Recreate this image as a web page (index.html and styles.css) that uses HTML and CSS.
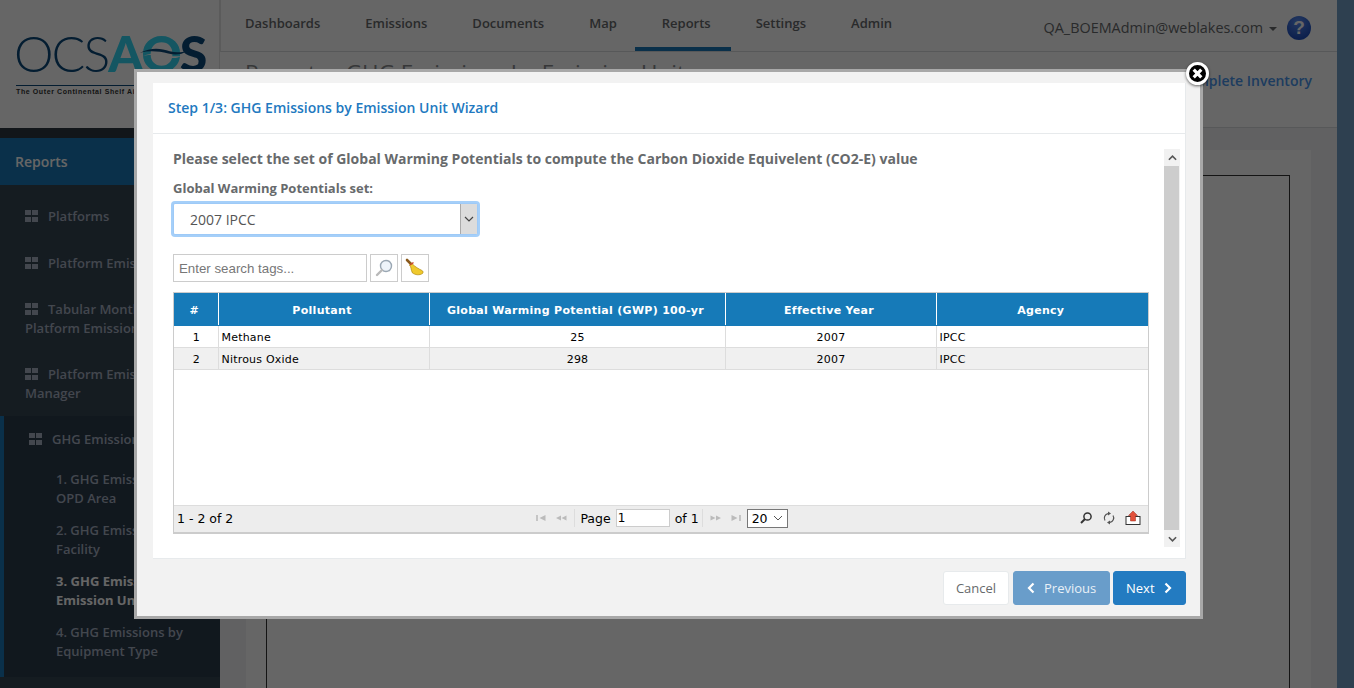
FILE: index.html
```html
<!DOCTYPE html>
<html lang="en">
<head>
    <meta charset="UTF-8">
    <title>Reports - GHG Emissions by Emission Unit</title>
    <link rel="stylesheet" href="styles.css">
</head>
<body>
    <div class="app">
        <!-- Sidebar -->
        <aside class="sidebar">
            <div class="logo">
                <div class="logo-mark">
                    <span class="logo-ocs">OCS</span><span class="logo-a">A</span><span class="logo-q">Q</span><span class="logo-s">S</span>
                    <svg class="logo-wave" viewBox="0 0 60 16"><path d="M4 13c12-5 22-4 32-1 7 2 12 2 18 0-7 5-14 4-22 2-10-3-18-3-28-1z" fill="#fff"/><path d="M0 9C14 2 26 3 38 7c8 2 15 2 22-1-7 6-15 6-24 4C24 7 12 6 0 9z" fill="#0c4a7c"/></svg>
                </div>
                <div class="logo-tag">The Outer Continental Shelf Air Quality System</div>
            </div>
            <div class="side-title">Reports</div>
            <ul class="side-menu">
                <li class="side-item"><span class="grid-icon"></span>Platforms</li>
                <li class="side-item"><span class="grid-icon"></span>Platform Emissions</li>
                <li class="side-item"><span class="grid-icon"></span>Tabular Monthly Platform Emissions</li>
                <li class="side-item"><span class="grid-icon"></span>Platform Emissions Manager</li>
                <li class="side-group">
                    <div class="side-group-title"><span class="grid-icon"></span>GHG Emissions Reports</div>
                    <a class="side-sub">1. GHG Emissions by OPD Area</a>
                    <a class="side-sub">2. GHG Emissions by Facility</a>
                    <a class="side-sub current">3. GHG Emissions by Emission Unit</a>
                    <a class="side-sub">4. GHG Emissions by Equipment Type</a>
                </li>
            </ul>
        </aside>

        <!-- Main -->
        <div class="main">
            <header class="topbar">
                <nav class="tabs">
                    <a class="tab">Dashboards</a>
                    <a class="tab">Emissions</a>
                    <a class="tab">Documents</a>
                    <a class="tab">Map</a>
                    <a class="tab active">Reports</a>
                    <a class="tab">Settings</a>
                    <a class="tab">Admin</a>
                </nav>
                <div class="user">
                    <span>QA_BOEMAdmin@weblakes.com</span>
                    <span class="caret"></span>
                    <span class="help">?</span>
                </div>
            </header>
            <div class="title-row">
                <h2 class="page-title">Reports - GHG Emissions by Emission Unit</h2>
                <a class="inventory">Complete Inventory</a>
            </div>
            <div class="content">
                <div class="panel">
                    <div class="report-frame"></div>
                </div>
            </div>
        </div>
        <div class="edge"></div>
    </div>

    <div class="overlay"></div>

    <!-- Wizard -->
    <div class="modal">
        <div class="close">
            <svg viewBox="0 0 12 12" width="13" height="13"><path d="M2.500 2.500l7 7M9.500 2.500l-7 7" stroke="#fff" stroke-width="3"/></svg>
        </div>
        <div class="wizard">
            <div class="wizard-head">Step 1/3: GHG Emissions by Emission Unit Wizard</div>
            <div class="wizard-body">
                <div class="wizard-main">
                    <h4 class="prompt">Please select the set of Global Warming Potentials to compute the Carbon Dioxide Equivelent (CO2-E) value</h4>
                    <label class="field-label">Global Warming Potentials set:</label>
                    <div class="select-box">
                        <span class="select-value">2007 IPCC</span>
                        <span class="select-btn">
                            <svg viewBox="0 0 10 6" width="10" height="6"><path d="M1 1l4 4 4-4" fill="none" stroke="#444" stroke-width="1.2"/></svg>
                        </span>
                    </div>
                    <div class="search-row">
                        <input class="search-input" type="text" placeholder="Enter search tags...">
                        <span class="icon-btn">
                            <svg viewBox="0 0 20 20" width="20" height="20"><circle cx="12" cy="8" r="5.500" fill="#eef4fa" stroke="#9aa7b3" stroke-width="1.400"/><path d="M8 12l-5 5" stroke="#b9b9b9" stroke-width="2.400" stroke-linecap="round"/></svg>
                        </span>
                        <span class="icon-btn">
                            <svg viewBox="0 0 20 20" width="20" height="20"><path d="M2 2l4 4" stroke="#8a5a1c" stroke-width="2.600" stroke-linecap="round"/><path d="M6.500 5l-2 2.500c2 1 1 4 3 7.500 3 2 7 2.500 10 .5 1-1 .5-2.500-.5-3-3-1.500-7-3.500-10.500-7.500z" fill="#efc92c" stroke="#b08a10" stroke-width=".7"/><path d="M5 7l3.500-2.500" stroke="#c8402a" stroke-width="1.400"/></svg>
                        </span>
                    </div>
                    <div class="grid">
                        <table class="grid-table">
                            <colgroup>
                                <col class="col-num"><col class="col-pollutant"><col class="col-gwp"><col class="col-year"><col class="col-agency">
                            </colgroup>
                            <thead>
                                <tr>
                                    <th>#</th>
                                    <th>Pollutant</th>
                                    <th>Global Warming Potential (GWP) 100-yr</th>
                                    <th>Effective Year</th>
                                    <th>Agency</th>
                                </tr>
                            </thead>
                            <tbody>
                                <tr>
                                    <td class="center">1</td>
                                    <td>Methane</td>
                                    <td class="center">25</td>
                                    <td class="center">2007</td>
                                    <td>IPCC</td>
                                </tr>
                                <tr class="alt">
                                    <td class="center">2</td>
                                    <td>Nitrous Oxide</td>
                                    <td class="center">298</td>
                                    <td class="center">2007</td>
                                    <td>IPCC</td>
                                </tr>
                            </tbody>
                        </table>
                        <div class="pager">
                            <div class="pager-count">1 - 2 of 2</div>
                            <div class="pager-center">
                                <svg class="pg-icon tight" viewBox="0 0 11 8" width="11" height="8"><path d="M1 1v6" stroke="#aaa" stroke-width="1.200"/><path d="M9.500 1v6L3.500 4z" fill="#bbb"/></svg>
                                <svg class="pg-icon" viewBox="0 0 12 8" width="12" height="8"><path d="M6 1.500v5L1 4zM11.500 1.500v5L6.500 4z" fill="#bbb"/></svg>
                                <span class="pg-sep"></span>
                                <span>Page</span>
                                <input class="pg-input" type="text" value="1">
                                <span>of 1</span>
                                <span class="pg-sep pg-sep-right"></span>
                                <svg class="pg-icon tight" viewBox="0 0 12 8" width="12" height="8"><path d="M.5 1.500v5L5.500 4zM6 1.500v5L11 4z" fill="#bbb"/></svg>
                                <svg class="pg-icon tight" viewBox="0 0 11 8" width="11" height="8"><path d="M1.500 1v6l6-3z" fill="#bbb"/><path d="M10 1v6" stroke="#aaa" stroke-width="1.200"/></svg>
                                <span class="pg-size">20
                                    <svg viewBox="0 0 10 6" width="10" height="6"><path d="M1 1l4 4 4-4" fill="none" stroke="#555" stroke-width="1"/></svg>
                                </span>
                            </div>
                            <div class="pager-tools">
                                <svg viewBox="0 0 14 14" width="14" height="14"><circle cx="8.500" cy="5.500" r="3.600" fill="none" stroke="#333" stroke-width="1.500"/><path d="M6 8l-4 4" stroke="#333" stroke-width="2"/></svg>
                                <svg viewBox="0 0 14 14" width="14" height="14"><path d="M3 9.500A4.500 4.500 0 0 1 6 2.700M11 4.500A4.500 4.500 0 0 1 8 11.300" fill="none" stroke="#555" stroke-width="1.200"/><path d="M6 .5l3 2-3 2zM8 9.500l-3 2 3 2z" fill="#555"/></svg>
                                <svg viewBox="0 0 16 14" width="16" height="14"><rect x="1" y="5.500" width="14" height="8" fill="#fff" stroke="#333"/><path d="M8 0l4.500 4.500H10.500V10h-5V4.500H3.500z" fill="#e2503a" stroke="#9c2a1a" stroke-width=".5"/></svg>
                            </div>
                        </div>
                    </div>
                </div>
                <div class="scrollbar">
                    <span class="scroll-btn"><svg viewBox="0 0 10 6" width="9" height="6"><path d="M1 5l4-4 4 4" fill="none" stroke="#555" stroke-width="1.800"/></svg></span>
                    <span class="scroll-thumb"></span>
                    <span class="scroll-btn"><svg viewBox="0 0 10 6" width="9" height="6"><path d="M1 1l4 4 4-4" fill="none" stroke="#555" stroke-width="1.800"/></svg></span>
                </div>
            </div>
        </div>
        <div class="wizard-foot">
            <button class="btn btn-cancel">Cancel</button>
            <button class="btn btn-prev">
                <svg viewBox="0 0 8 12" width="8" height="12"><path d="M6.500 1.500L2 6l4.500 4.500" fill="none" stroke="#fff" stroke-width="2.200"/></svg>
                Previous
            </button>
            <button class="btn btn-next">
                Next
                <svg viewBox="0 0 8 12" width="8" height="12"><path d="M1.500 1.500L6 6l-4.500 4.500" fill="none" stroke="#fff" stroke-width="2.200"/></svg>
            </button>
        </div>
    </div>
</body>
</html>
```

FILE: styles.css
```css
* {
    box-sizing: border-box;
}

html, body {
    margin: 0;
    height: 100%;
    overflow: hidden;
}

body {
    font-family: "Open Sans", Arial, sans-serif;
    font-size: 13px;
    color: #676a6c;
    background: #fff;
}

.app {
    display: flex;
    height: 688px;
    overflow: hidden;
}

/* Sidebar */
.sidebar {
    width: 220px;
    flex-shrink: 0;
    background: #364654;
    color: #a7b1c2;
    font-weight: 600;
    display: flex;
    flex-direction: column;
}

.logo {
    height: 128px;
    margin-bottom: 10px;
    padding: 28px 0 0 14px;
    background: #fff;
    box-shadow: 0 10px 0 #2d3842;
    border-right: 1px solid #e4e4e4;
}

.logo-mark {
    position: relative;
    display: flex;
    height: 50px;
    line-height: 50px;
    font-family: Lato, sans-serif;
    font-size: 50px;
    letter-spacing: -2px;
}

.logo-ocs {
    font-weight: 300;
    color: #0c4a7c;
}

.logo-a, .logo-q, .logo-s {
    font-weight: 900;
    color: #32d8f5;
}

.logo-s {
    color: #0c4a7c;
}

.logo-wave {
    position: absolute;
    left: 126px;
    top: 17px;
    width: 47px;
    height: 14px;
}

.logo-tag {
    margin: 7px 0 0 2px;
    padding-top: 2px;
    width: 190px;
    border-top: 1px solid #0c4a7c;
    font-family: "Liberation Sans", sans-serif;
    font-size: 7px;
    font-weight: 700;
    letter-spacing: .6px;
    white-space: nowrap;
    color: #333;
}

.side-title {
    height: 47px;
    line-height: 47px;
    padding-left: 15px;
    font-size: 14px;
    color: #fff;
    background: #1a79b8;
}

.side-menu {
    list-style: none;
    margin: 0;
    padding: 0;
    flex: 1;
}

.side-item {
    padding: 22px 25px 13px;
    line-height: 19px;
}

.side-item:nth-child(1) { height: 47px; padding-top: 22px; }
.side-item:nth-child(2) { height: 47px; }
.side-item:nth-child(3) { height: 64px; padding-top: 21px; }
.side-item:nth-child(4) { height: 73px; padding-top: 22px; }

.grid-icon {
    display: inline-block;
    width: 13px;
    height: 12px;
    margin-right: 10px;
    vertical-align: -1px;
    background:
        linear-gradient(#a7b1c2, #a7b1c2) 0 0 / 6px 5px no-repeat,
        linear-gradient(#a7b1c2, #a7b1c2) 100% 0 / 6px 5px no-repeat,
        linear-gradient(#a7b1c2, #a7b1c2) 0 100% / 6px 5px no-repeat,
        linear-gradient(#a7b1c2, #a7b1c2) 100% 100% / 6px 5px no-repeat;
}

.side-group {
    height: 261px;
    padding-top: 14px;
    border-left: 4px solid #1a79b8;
    background: #2b3c4d;
}

.side-group-title {
    padding-left: 25px;
    line-height: 18px;
    margin-bottom: 16px;
    white-space: nowrap;
}

.side-sub {
    display: block;
    padding: 6px 25px 7px 52px;
    line-height: 19px;
    color: #a7b1c2;
}

.side-sub.current {
    color: #fff;
    font-weight: 700;
}

/* Top */
.main {
    flex: 1;
    min-width: 0;
    display: flex;
    flex-direction: column;
}

.topbar {
    height: 52px;
    flex-shrink: 0;
    display: flex;
    justify-content: space-between;
    border-bottom: 1px solid #d9dcdf;
    border-left: 1px solid #e4e4e4;
    background: #fff;
}

.tabs {
    display: flex;
    padding-left: 1.5px;
}

.tab {
    position: relative;
    padding: 14px 22.5px 0;
    height: 51px;
    font-weight: 600;
    font-size: 13px;
    color: #676a6c;
}

.tab.active::after {
    content: "";
    position: absolute;
    left: -4px;
    right: 2px;
    bottom: 0;
    height: 4px;
    background: #1a79b8;
}

.user {
    display: flex;
    align-items: center;
    padding: 4px 26px 0 0;
    font-size: 14.4px;
    color: #676a6c;
}

.caret {
    width: 0;
    height: 0;
    margin: 2px 10px 0 6px;
    border: 4px solid transparent;
    border-top-color: #676a6c;
    border-bottom: 0;
}

.help {
    width: 24px;
    height: 24px;
    border-radius: 50%;
    text-align: center;
    line-height: 24px;
    font-family: "Liberation Sans", sans-serif;
    font-size: 19px;
    font-weight: 700;
    color: #fff;
    background: radial-gradient(circle at 45% 25%, #5a8cf0, #1f50c0 75%);
}

.title-row {
    height: 76px;
    flex-shrink: 0;
    display: flex;
    justify-content: space-between;
    padding: 8px 25px 0 25px;
    border-bottom: 1px solid #d9dcdf;
    background: #fff;
}

.page-title {
    margin: 0;
    font-size: 22.5px;
    font-weight: 400;
    line-height: 26px;
    color: #8a8d90;
}

.inventory {
    margin-top: 11px;
    font-size: 14px;
    font-weight: 600;
    color: #4a96ee;
}

.content {
    flex: 1;
    padding: 22px 26px 0;
    background: #f3f3f4;
}

.panel {
    height: 100%;
    padding: 25px 21px 0 20px;
    background: #fff;
}

.report-frame {
    height: 100%;
    border: 1px solid #333;
    border-bottom: 0;
}

.edge {
    width: 17px;
    flex-shrink: 0;
    background: #74a0c8;
}

.overlay {
    position: fixed;
    inset: 0;
    background: rgba(0, 0, 0, .6);
}

/* Wizard */
.modal {
    position: absolute;
    left: 134px;
    top: 69px;
    width: 1069px;
    height: 550px;
    padding: 11px 14px 0 16px;
    border: 3px solid #a8a8a8;
    background: #f2f2f2;
}

.close {
    position: absolute;
    right: -9px;
    top: -10px;
    width: 23px;
    height: 23px;
    display: flex;
    align-items: center;
    justify-content: center;
    border: 3px solid #fff;
    border-radius: 50%;
    background: #000;
    box-shadow: 0 1px 3px rgba(0, 0, 0, .6);
}

.wizard {
    height: 476px;
    display: flex;
    flex-direction: column;
    background: #fff;
    border: 1px solid #e7eaec;
    border-left: 0;
    border-top: 0;
}

.wizard-head {
    height: 51px;
    flex-shrink: 0;
    padding: 0 0 0 15px;
    line-height: 50px;
    font-size: 14px;
    font-weight: 600;
    color: #2279c0;
    border-bottom: 1px solid #e7eaec;
}

.wizard-body {
    flex: 1;
    display: flex;
    padding: 15px 5px 0 20px;
}

.wizard-main {
    flex: 1;
    min-width: 0;
}

.prompt {
    margin: 0 0 10px;
    font-size: 14px;
    font-weight: 700;
    line-height: 20px;
    color: #676a6c;
}

.field-label {
    display: block;
    margin-bottom: 6px;
    font-size: 13px;
    font-weight: 700;
    line-height: 18px;
    color: #676a6c;
}

.select-box {
    display: flex;
    justify-content: space-between;
    width: 305px;
    height: 32px;
    border: 1px solid #9ecaf7;
    border-radius: 2px;
    box-shadow: 0 0 0 2px #a5cff9;
    background: #fff;
}

.select-value {
    padding-left: 16px;
    line-height: 32px;
    font-size: 14px;
    color: #555;
}

.select-btn {
    width: 17px;
    display: flex;
    align-items: center;
    justify-content: center;
    border-left: 1px solid #aaa;
    background: #dcdcdc;
}

.search-row {
    display: flex;
    gap: 3px;
    margin-top: 19px;
}

.search-input {
    width: 194px;
    height: 28px;
    padding: 0 5px;
    font-family: "Liberation Sans", sans-serif;
    font-size: 13.3px;
    border: 1px solid #ccc;
    outline: 0;
}

.search-input::placeholder {
    color: #777;
}

.icon-btn {
    width: 28px;
    height: 28px;
    display: flex;
    align-items: center;
    justify-content: center;
    border: 1px solid #ccc;
    background: #fff;
}

/* Grid */
.grid {
    width: 976px;
    height: 242px;
    margin-top: 10px;
    display: flex;
    flex-direction: column;
    justify-content: space-between;
    border: 1px solid #ccc;
    border-bottom: 2px solid #ccc;
    font-family: "DejaVu Sans", Verdana, sans-serif;
    font-size: 11px;
    color: #000;
}

.grid-table {
    width: 974px;
    table-layout: fixed;
    border-collapse: collapse;
    letter-spacing: .2px;
}

.col-num { width: 44px; }
.col-pollutant { width: 211px; }
.col-gwp { width: 296px; }
.col-year { width: 211px; }
.col-agency { width: 212px; }

.grid-table th {
    height: 32px;
    padding: 4px 3px 0 0;
    font-size: 11px;
    font-weight: 700;
    letter-spacing: .3px;
    color: #fff;
    background: #167ab8;
    border-left: 1px solid #fff;
    border-bottom: 1px solid #167ab8;
}

.grid-table th:first-child,
.grid-table td:first-child {
    border-left: 0;
}

.grid-table td {
    height: 22px;
    padding: 3px 2px 0 3px;
    border-left: 1px solid #ddd;
    border-bottom: 1px solid #ddd;
}

.grid-table .center {
    text-align: center;
}

.grid-table .alt td {
    background: #f0f0f0;
}

.pager {
    height: 27px;
    display: grid;
    grid-template-columns: 1fr auto 1fr;
    align-items: center;
    padding: 0 7px 2px 3px;
    font-size: 12.5px;
    background: #ededed;
    border-top: 1px solid #ddd;
}

.pager-center {
    display: flex;
    align-items: center;
    gap: 5px;
    padding-left: 4px;
}

.pg-icon {
    margin: 0 2px;
}

.pg-icon.tight {
    margin-right: 1px;
}

.pg-sep {
    width: 1px;
    height: 18px;
    background: #ddd;
}

.pg-sep-right {
    margin-left: -2px;
}

.pg-input {
    width: 54px;
    height: 18px;
    padding: 0 1px;
    font-family: inherit;
    font-size: 12px;
    border: 1px solid #ccc;
    outline: 0;
}

.pg-size {
    display: flex;
    align-items: center;
    justify-content: space-between;
    width: 41px;
    height: 19px;
    padding: 0 4px;
    border: 1px solid #777;
    background: #fff;
}

.pager-tools {
    display: flex;
    justify-content: flex-end;
    align-items: center;
    gap: 9px;
}

/* Scrollbar */
.scrollbar {
    width: 16px;
    height: 398px;
    display: flex;
    flex-direction: column;
    background: #f1f1f1;
}

.scroll-btn {
    height: 17px;
    display: flex;
    align-items: center;
    justify-content: center;
}

.scroll-thumb {
    flex: 1;
    margin-right: 1px;
    background: #cdcdcd;
}

/* Footer buttons */
.wizard-foot {
    display: flex;
    justify-content: flex-end;
    gap: 3px;
    margin-top: 12px;
}

.btn {
    height: 34px;
    font-family: inherit;
    font-size: 13px;
    border-radius: 3px;
    display: flex;
    align-items: center;
}

.btn-cancel {
    width: 66px;
    margin-right: 1px;
    justify-content: center;
    color: #676a6c;
    background: #fff;
    border: 1px solid #e7eaec;
}

.btn-prev {
    width: 97px;
    gap: 9px;
    padding: 0 0 0 13px;
    color: #e8f0f7;
    background: #699dca;
    border: 1px solid #699dca;
}

.btn-next {
    width: 73px;
    gap: 9px;
    padding: 0 0 0 12px;
    color: #fff;
    background: #237bc1;
    border: 1px solid #237bc1;
}
```
